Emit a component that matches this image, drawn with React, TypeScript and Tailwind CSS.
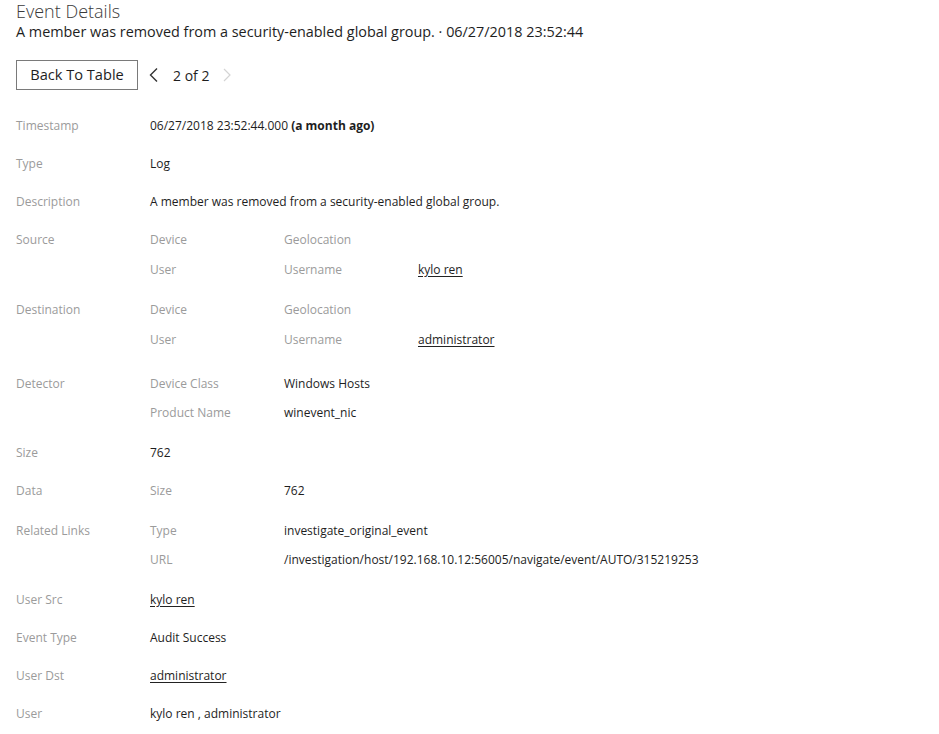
import { ReactNode } from 'react';

type Sub = { label: string; mid?: ReactNode; value?: ReactNode };

const Link = ({ children }: { children: ReactNode }) => (
  <span className="underline underline-offset-2 decoration-[#222]">{children}</span>
);

function Row({ label, children }: { label: string; children: ReactNode }) {
  return (
    <div className="flex py-[10px] leading-[18px]">
      <div className="w-[134px] shrink-0 text-[#9b9b9b]">{label}</div>
      <div className="text-[#1e1e1e]">{children}</div>
    </div>
  );
}

function MultiRow({
  label,
  subs,
  gap,
  pad,
  wide = false,
}: {
  label: string;
  subs: Sub[];
  gap: string;
  pad: string;
  wide?: boolean;
}) {
  return (
    <div className={`flex pt-[10px] leading-[18px] ${pad}`}>
      <div className="w-[134px] shrink-0 text-[#9b9b9b]">{label}</div>
      <div className={`flex flex-col ${gap}`}>
        {subs.map((s) => (
          <div key={s.label} className="flex">
            <div className="w-[134px] shrink-0 text-[#9b9b9b]">{s.label}</div>
            {wide ? (
              <div className="text-[#1e1e1e]">{s.value}</div>
            ) : (
              <>
                <div className="w-[134px] shrink-0 text-[#9b9b9b]">{s.mid}</div>
                <div className="text-[#1e1e1e]">{s.value}</div>
              </>
            )}
          </div>
        ))}
      </div>
    </div>
  );
}

export default function App() {
  return (
    <div
      className="min-h-screen bg-white px-4 text-[12px] text-[#1e1e1e]"
      style={{ fontFamily: '"Open Sans", "Liberation Sans", sans-serif' }}
    >
      <h1 className="pt-px text-[18px] leading-[20px] text-[#3a3a3a] font-light">Event Details</h1>
      <div className="mt-px text-[14.4px] leading-[20px] text-[#1e1e1e]">
        A member was removed from a security-enabled global group. · 06/27/2018 23:52:44
      </div>

      <div className="mt-[18px] flex items-center">
        <button className="h-[30px] w-[122px] border border-[#7a7a7a] bg-white text-[14.6px] text-[#1e1e1e]">
          Back To Table
        </button>
        <svg width="12" height="16" viewBox="0 0 12 16" className="ml-[10px]">
          <path d="M9 1.5 L2.5 8 L9 14.5" fill="none" stroke="#333" strokeWidth="1.4" />
        </svg>
        <span className="ml-[13px] text-[14px] text-[#1e1e1e]">2 of 2</span>
        <svg width="10" height="16" viewBox="0 0 10 16" className="ml-[13px]">
          <path d="M2 2 L8 8 L2 14" fill="none" stroke="#d4d4d4" strokeWidth="1.2" />
        </svg>
      </div>

      <div className="mt-[17px]">
        <Row label="Timestamp">
          06/27/2018 23:52:44.000 <span className="font-bold">(a month ago)</span>
        </Row>
        <Row label="Type">Log</Row>
        <Row label="Description">A member was removed from a security-enabled global group.</Row>
        <MultiRow
          label="Source"
          gap="gap-[12px]"
          pad="pb-[12px]"
          subs={[
            { label: 'Device', mid: 'Geolocation' },
            { label: 'User', mid: 'Username', value: <Link>kylo ren</Link> },
          ]}
        />
        <MultiRow
          label="Destination"
          gap="gap-[12px]"
          pad="pb-[16px]"
          subs={[
            { label: 'Device', mid: 'Geolocation' },
            { label: 'User', mid: 'Username', value: <Link>administrator</Link> },
          ]}
        />
        <MultiRow
          label="Detector"
          gap="gap-[11px]"
          pad="pb-[12px]"
          wide
          subs={[
            { label: 'Device Class', value: 'Windows Hosts' },
            { label: 'Product Name', value: 'winevent_nic' },
          ]}
        />
        <Row label="Size">762</Row>
        <MultiRow label="Data" gap="gap-0" pad="pb-[12px]" wide subs={[{ label: 'Size', value: '762' }]} />
        <MultiRow
          label="Related Links"
          gap="gap-[11px]"
          pad="pb-[12px]"
          wide
          subs={[
            { label: 'Type', value: 'investigate_original_event' },
            { label: 'URL', value: '/investigation/host/192.168.10.12:56005/navigate/event/AUTO/315219253' },
          ]}
        />
        <Row label="User Src">
          <Link>kylo ren</Link>
        </Row>
        <Row label="Event Type">Audit Success</Row>
        <Row label="User Dst">
          <Link>administrator</Link>
        </Row>
        <Row label="User">kylo ren , administrator</Row>
      </div>
    </div>
  );
}
